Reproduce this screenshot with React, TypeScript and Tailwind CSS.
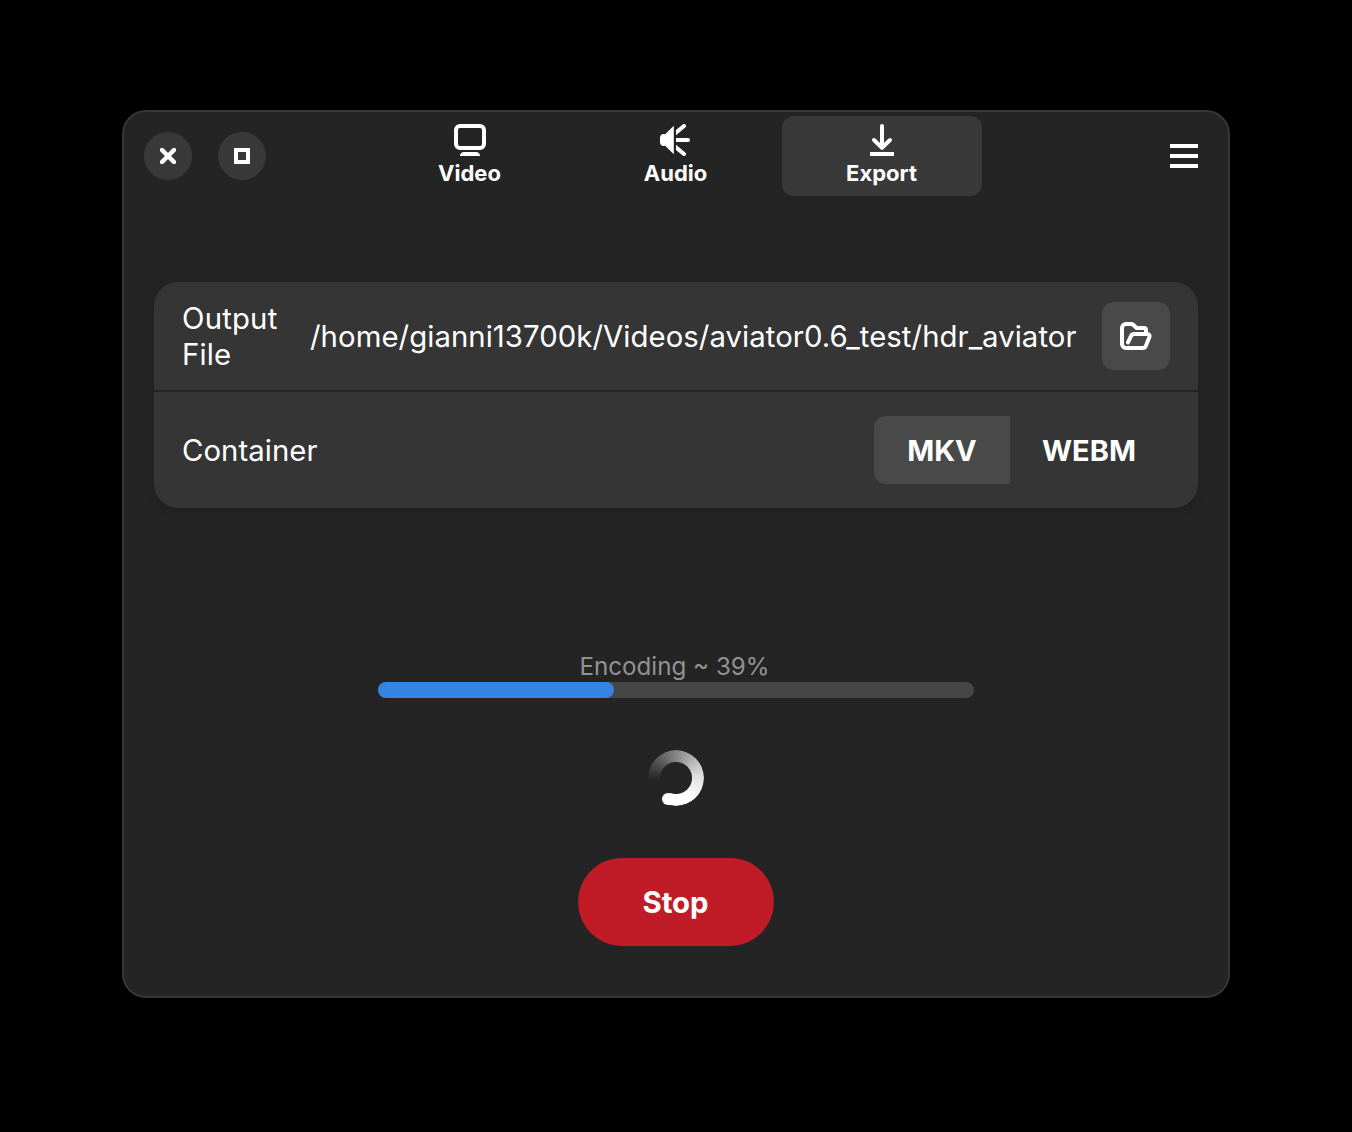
import type { ReactNode } from "react";

function VideoIcon() {
  return (
    <svg className="size-8" viewBox="0 0 16 16" fill="none">
      <rect x="1" y="1" width="14" height="11" rx="2" stroke="white" strokeWidth="2" />
      <path d="M3 16c0-1.200.9-2 2-2h6c1.100 0 2 .8 2 2z" fill="white" />
    </svg>
  );
}

function AudioIcon() {
  return (
    <svg className="size-8" viewBox="0 0 16 16" fill="none">
      <path d="M6.900.9v14.200L2.700 11H2a2 2 0 0 1-2-2V7a2 2 0 0 1 2-2h.7z" fill="white" />
      <svg x="8" y="0" width="8" height="16" viewBox="8 0 8 16">
        <path d="M7 5.200L12 1M7 8h7M7 10.800l5 4.200" stroke="white" strokeWidth="2" strokeLinecap="round" />
      </svg>
    </svg>
  );
}

function ExportIcon() {
  return (
    <svg className="size-8" viewBox="0 0 16 16" fill="none">
      <path d="M8 1v10.800M4 8l4 3.900L12 8" stroke="white" strokeWidth="2" strokeLinecap="round" strokeLinejoin="round" />
      <path d="M2 14h12v2H2z" fill="white" />
    </svg>
  );
}

function FolderIcon() {
  return (
    <svg className="size-8" viewBox="0 0 16 16" fill="none" stroke="white" strokeWidth="2" strokeLinecap="round" strokeLinejoin="round">
      <path d="M13 6V5a1 1 0 0 0-1-1H8.300L6.600 2.400Q6.200 2 5.600 2H3a2 2 0 0 0-2 2v8a2 2 0 0 0 2 2h8.400c.8 0 1.200-.3 1.500-1l1.700-4.200C15 7.800 14.600 7 13.600 7H7.300c-.9 0-1.500.3-1.800 1L4 11.200" />
    </svg>
  );
}

function Tab({ label, icon, active = false }: { label: string; icon: ReactNode; active?: boolean }) {
  return (
    <button className={`flex h-20 w-[200px] flex-col items-center rounded-xl pt-2 ${active ? "bg-[#393939]" : ""}`}>
      {icon}
      <span className="mt-[3px] mr-px text-[22px] leading-7 font-bold">{label}</span>
    </button>
  );
}

function Spinner() {
  return (
    <div className="relative size-14">
      <div className="size-14 rounded-full bg-[conic-gradient(from_264deg,rgba(255,255,255,0)_0deg,rgba(255,255,255,0.42)_90deg,rgba(255,255,255,0.85)_180deg,#fff_240deg,#fff_298deg,transparent_298deg)] [mask-image:radial-gradient(circle,transparent_15.5px,black_16.5px)]" />
      <div className="absolute top-[42.5px] left-[14px] size-3 rounded-full bg-white" />
    </div>
  );
}

export default function App() {
  return (
    <div className="flex h-[1132px] w-[1352px] bg-black px-[122px] pt-[110px] font-['Inter',sans-serif] text-white">
      <main className="flex h-[888px] w-[1108px] flex-col rounded-3xl border-2 border-[#363636] bg-[#242424]">
        <header className="grid h-[88px] grid-cols-[1fr_auto_1fr] items-center px-5">
          <div className="flex gap-[26px]">
            <button aria-label="Close" className="flex size-12 items-center justify-center rounded-full bg-[#393939]">
              <svg className="size-4" viewBox="0 0 16 16">
                <path d="M2 2l12 12M14 2L2 14" stroke="white" strokeWidth="4.500" strokeLinecap="round" />
              </svg>
            </button>
            <button aria-label="Maximize" className="flex size-12 items-center justify-center rounded-full bg-[#393939]">
              <span className="size-4 border-4 border-white" />
            </button>
          </div>
          <nav className="flex gap-1.5">
            <Tab label="Video" icon={<VideoIcon />} />
            <Tab label="Audio" icon={<AudioIcon />} />
            <Tab label="Export" icon={<ExportIcon />} active />
          </nav>
          <button aria-label="Menu" className="mr-2.5 flex w-7 flex-col gap-1.5 justify-self-end">
            <span className="h-1 bg-white" />
            <span className="h-1 bg-white" />
            <span className="h-1 bg-white" />
          </button>
        </header>

        <section className="mx-[30px] mt-[82px] rounded-3xl bg-[#353535] text-[29.33px] leading-9 tracking-[0.055px] shadow-[0_2px_6px_2px_rgba(0,0,0,0.12)]">
          <div className="flex h-[110px] items-center border-b-2 border-[#242424] px-7">
            <div className="w-32 pt-px tracking-[0.2px]">Output<br />File</div>
            <div className="flex-1 pt-0.5 whitespace-nowrap">/home/gianni13700k/Videos/aviator0.6_test/hdr_aviator</div>
            <button aria-label="Choose file" className="flex size-[68px] items-center justify-center rounded-xl bg-[#494949]">
              <FolderIcon />
            </button>
          </div>
          <div className="flex h-[116px] items-center justify-between px-7">
            <span className="pt-0.5">Container</span>
            <div className="flex text-[29px] font-bold tracking-normal">
              <button className="h-[68px] w-[136px] rounded-l-xl bg-[#494949] pt-0.5">MKV</button>
              <button className="h-[68px] w-40 pt-0.5 pr-0.5">WEBM</button>
            </div>
          </div>
        </section>

        <section className="mt-[142px] flex flex-col items-center">
          <p className="h-8 pt-px pr-[3px] text-[24.2px] leading-8 text-[#929292]">Encoding ~ 39%</p>
          <div className="h-4 w-[596px] rounded-full bg-[#464646]">
            <div className="h-4 w-[236px] rounded-full bg-[#3584e4]" />
          </div>
          <div className="mt-[52px]">
            <Spinner />
          </div>
          <button className="mt-[52px] h-[88px] w-[196px] rounded-full bg-[#c01c28] pt-px pr-px text-[29.33px] font-bold">Stop</button>
        </section>
      </main>
    </div>
  );
}
